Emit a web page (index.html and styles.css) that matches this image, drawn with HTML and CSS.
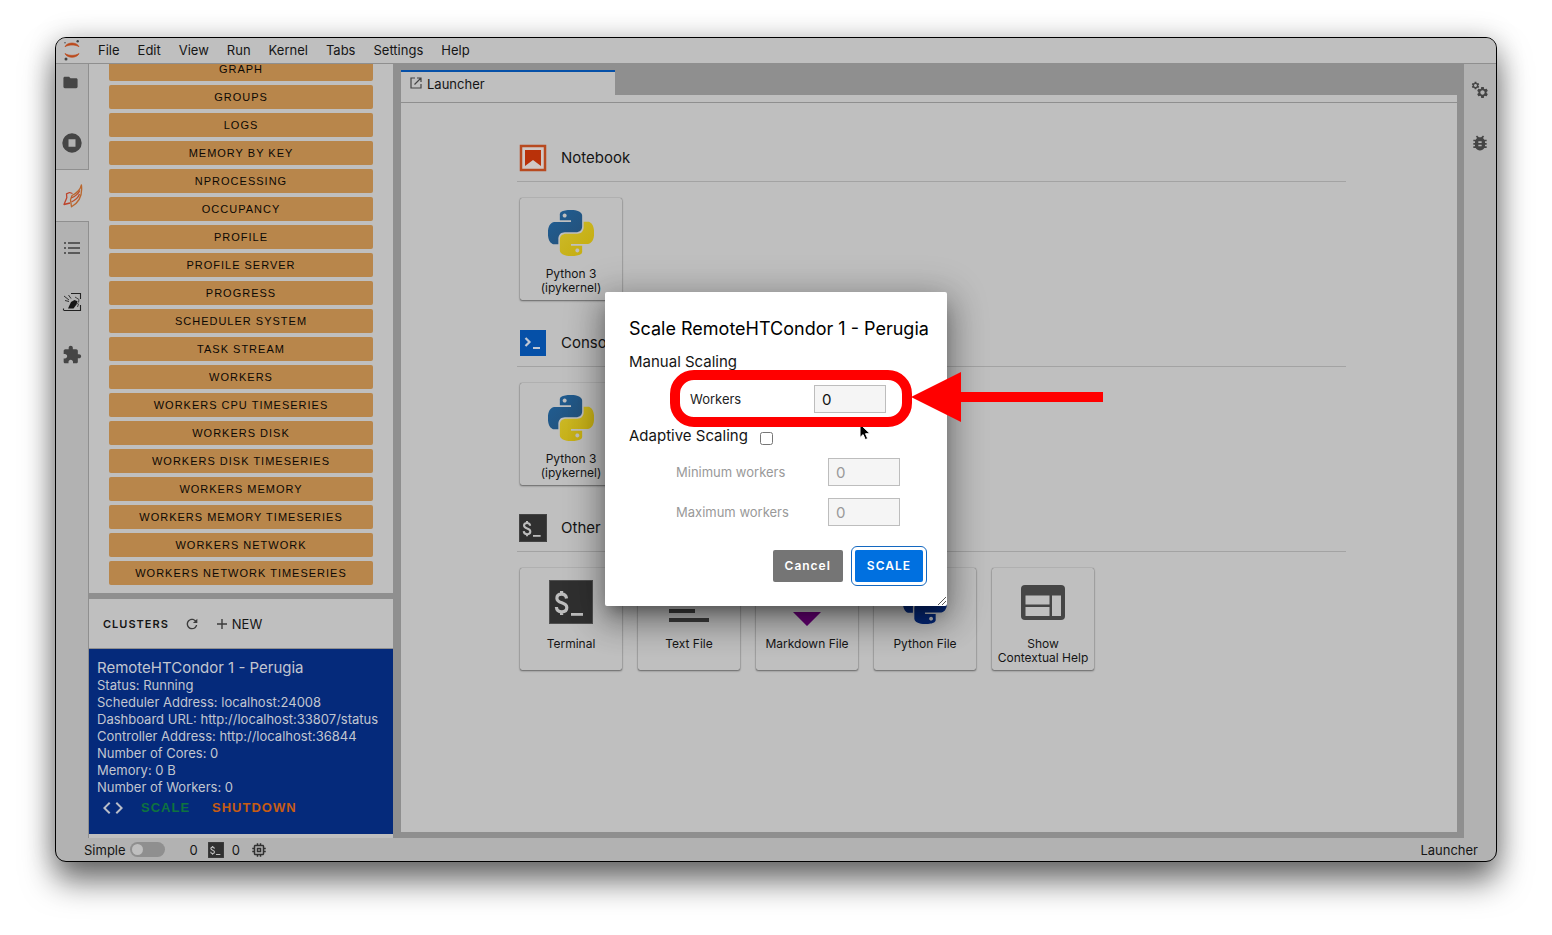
FILE: index.html
```html
<!DOCTYPE html>
<html lang="en">
<head>
<meta charset="utf-8">
<title>JupyterLab</title>
<link rel="stylesheet" href="styles.css">
</head>
<body>
<svg class="defs" width="0" height="0" aria-hidden="true">
  <linearGradient id="py-blue" x1="0" y1="0" x2="1" y2="1"><stop offset="0" stop-color="#1f5f96"/><stop offset="1" stop-color="#254f76"/></linearGradient>
  <linearGradient id="py-yellow" x1="0" y1="0" x2="1" y2="1"><stop offset="0" stop-color="#cdbb2c"/><stop offset="1" stop-color="#c4ab0c"/></linearGradient>
  <symbol id="py-top" viewBox="0 0 24 24"><path d="M14.25.18l.9.2.73.26.59.3.45.32.34.34.25.34.16.33.1.3.04.26.02.2-.01.13V8.5l-.05.63-.13.55-.21.46-.26.38-.3.31-.33.25-.35.19-.35.14-.33.1-.3.07-.26.04-.21.02H8.77l-.69.05-.59.14-.5.22-.41.27-.33.32-.27.35-.2.36-.15.37-.1.35-.07.32-.04.27-.02.21v3.06H3.17l-.21-.03-.28-.07-.32-.12-.35-.18-.36-.26-.36-.36-.35-.46-.32-.59-.28-.73-.21-.88-.14-1.05-.05-1.23.06-1.22.16-1.04.24-.87.32-.71.36-.57.4-.44.42-.33.42-.24.4-.16.36-.1.32-.05.24-.01h.16l.06.01h8.16v-.83H6.18l-.01-2.75-.02-.37.05-.34.11-.31.17-.28.25-.26.31-.23.38-.2.44-.18.51-.15.58-.12.64-.1.71-.06.77-.04.84-.02 1.27.05zm-6.3 1.98l-.23.33-.08.41.08.41.23.34.33.22.41.09.41-.09.33-.22.23-.34.08-.41-.08-.41-.23-.33-.33-.22-.41-.09-.41.09z"/></symbol>
  <symbol id="py-bottom" viewBox="0 0 24 24"><path d="M21.04 6.11l.28.06.32.12.35.18.36.27.36.35.35.47.32.59.28.73.21.88.14 1.04.05 1.23-.06 1.23-.16 1.04-.24.86-.32.71-.36.57-.4.45-.42.33-.42.24-.4.16-.36.09-.32.05-.24.02-.16-.01h-8.22v.82h5.84l.01 2.76.02.36-.05.34-.11.31-.17.29-.25.25-.31.24-.38.2-.44.17-.51.15-.58.13-.64.09-.71.07-.77.04-.84.01-1.27-.04-1.07-.14-.9-.2-.73-.25-.59-.3-.45-.33-.34-.34-.25-.34-.16-.33-.1-.3-.04-.25-.02-.2.01-.13v-5.34l.05-.64.13-.54.21-.46.26-.38.3-.32.33-.24.35-.2.35-.14.33-.1.3-.06.26-.04.21-.02.13-.01h5.84l.69-.05.59-.14.5-.21.41-.28.33-.32.27-.35.2-.36.15-.36.1-.35.07-.32.04-.28.02-.21V6.07h2.09l.14.01zm-6.47 14.25l-.23.33-.08.41.08.41.23.33.33.23.41.08.41-.08.33-.23.23-.33.08-.41-.08-.41-.23-.33-.33-.23-.41-.08-.41.08z"/></symbol>
  <symbol id="gear" viewBox="0 0 24 24"><path d="M19.43 12.98c.04-.32.07-.64.07-.98s-.03-.66-.07-.98l2.11-1.65c.19-.15.24-.42.12-.64l-2-3.46c-.12-.22-.39-.3-.61-.22l-2.49 1c-.52-.4-1.08-.73-1.69-.98l-.38-2.65C14.46 2.18 14.25 2 14 2h-4c-.25 0-.46.18-.49.42l-.38 2.65c-.61.25-1.17.59-1.69.98l-2.49-1c-.23-.09-.49 0-.61.22l-2 3.46c-.13.22-.07.49.12.64l2.11 1.65c-.04.32-.07.65-.07.98s.03.66.07.98l-2.11 1.65c-.19.15-.24.42-.12.64l2 3.46c.12.22.39.3.61.22l2.49-1c.52.4 1.08.73 1.69.98l.38 2.65c.03.24.24.42.49.42h4c.25 0 .46-.18.49-.42l.38-2.65c.61-.25 1.17-.59 1.69-.98l2.49 1c.23.09.49 0 .61-.22l2-3.46c.12-.22.07-.49-.12-.64l-2.11-1.65zM12 16c-2.2 0-4-1.8-4-4s1.8-4 4-4 4 1.8 4 4-1.8 4-4 4z"/></symbol>
  <symbol id="terminal" viewBox="0 0 44 44"><rect width="44" height="44" fill="#303030"/><rect x=".5" y=".5" width="43" height="43" fill="none" stroke="#505050"/><path d="M17.500 18.500c-.3-3-2-4.300-4.900-4.300s-4.700 1.500-4.700 4c0 6 9.900 3.300 9.900 9.300 0 2.600-1.900 4.300-5 4.300-3.300 0-5.200-1.700-5.400-4.800M12.600 11v4M12.600 31v4" fill="none" stroke="#bdbdbd" stroke-width="3.200"/><path d="M22 33h12v2.800H22z" fill="#bdbdbd"/></symbol>
</svg>

<div class="window">
  <header class="menubar">
    <svg class="logo" width="18" height="22" viewBox="0 0 18 22" aria-label="Jupyter"><path d="M2 7.800C4 2.800 14 2.800 16 7.800 12.500 5.400 5.500 5.400 2 7.800zM2 14.500c2 5 12 5 14 0-3.500 2.500-10.500 2.500-14 0z" fill="#bb4a1c" stroke="#bb4a1c" stroke-width=".7"/><circle cx="14.700" cy="2.200" r="1.200" fill="#444"/><circle cx="2" cy="3.800" r=".8" fill="#555"/><circle cx="3" cy="20" r="1.500" fill="#444"/></svg>
    <nav class="menus" aria-label="Main menu">
      <button>File</button><button>Edit</button><button>View</button><button>Run</button><button>Kernel</button><button>Tabs</button><button>Settings</button><button>Help</button>
    </nav>
  </header>

  <div class="workspace">
    <nav class="rail rail-left" aria-label="Left sidebar">
      <button class="rail-tab rail-folder" aria-label="File browser"><svg width="17" height="17" viewBox="0 0 24 24"><path d="M10 4H4c-1.100 0-1.990.9-1.990 2L2 18c0 1.100.9 2 2 2h16c1.100 0 2-.9 2-2V8c0-1.100-.9-2-2-2h-8l-2-2z"/></svg></button>
      <button class="rail-tab" aria-label="Running terminals and kernels"><svg width="20" height="20" viewBox="0 0 20 20"><path fill-rule="evenodd" d="M10 .3a9.700 9.700 0 1 0 0 19.400A9.700 9.700 0 0 0 10 .3zM6.500 6.200h7v7.600h-7z"/></svg></button>
      <button class="rail-tab is-current" aria-label="Dask"><svg width="20" height="24" viewBox="0 0 20 24" fill="none" stroke-width="1.300" stroke-linejoin="round"><path d="M6.500 8.500l-3 1.300.3 4L1 20.500l6-1.500M6.500 8.500l3 1" stroke="#bd432b"/><path d="M8.500 22.800l-1-7 1.500-4.300C14 9 17.500 5.500 18.400 1c1.200 9-1.600 17-9.900 21.800z" stroke="#b9672f"/><path d="M8.300 14c4-1.800 7-4 8.500-7.500M8.500 18c4-2 7-5 8-8" stroke="#bd502d"/></svg></button>
      <button class="rail-tab" aria-label="Table of contents"><svg width="16" height="13" viewBox="0 0 16 13" fill="#5a5a5a"><path d="M0 0h2v2H0zM4 0h12v2H4zM0 5h2v2H0zM4 5h12v2H4zM0 10h2v2H0zM4 10h12v2H4z"/></svg></button>
      <button class="rail-tab" aria-label="Jobs"><svg width="20" height="20" viewBox="0 0 20 20"><path d="M9 1.500h9.500V7M18.500 13v5.500H2M1.500 16.500v2" fill="none" stroke="#222" stroke-width="1.100"/><path d="M6 16.500l3-6.500 3.500-2 3 1.200-1 3.300-3 4z" fill="#161616"/><path d="M2 4l5 4M6.500 3l2.500 3.500M3 8.500l4 1" stroke="#333" stroke-width="1"/><path d="M13 5l4 2.500-.5 3M15 11l1.500 1-1 3" stroke="#444" fill="none"/></svg></button>
      <button class="rail-tab" aria-label="Extensions"><svg width="20" height="20" viewBox="0 0 24 24"><path d="M20.500 11H19V7c0-1.100-.9-2-2-2h-4V3.500C13 2.120 11.880 1 10.500 1S8 2.120 8 3.500V5H4c-1.100 0-1.990.9-1.990 2v3.800H3.500c1.490 0 2.700 1.210 2.700 2.700s-1.210 2.700-2.700 2.700H2V20c0 1.100.9 2 2 2h3.800v-1.500c0-1.490 1.210-2.700 2.700-2.700 1.490 0 2.700 1.210 2.700 2.700V22H17c1.100 0 2-.9 2-2v-4h1.500c1.380 0 2.500-1.120 2.500-2.500S21.880 11 20.500 11z"/></svg></button>
      <div class="rail-rest"></div>
    </nav>

    <aside class="dask">
      <div class="dashboards">
        <button>GRAPH</button><button>GROUPS</button><button>LOGS</button><button>MEMORY BY KEY</button><button>NPROCESSING</button><button>OCCUPANCY</button><button>PROFILE</button><button>PROFILE SERVER</button><button>PROGRESS</button><button>SCHEDULER SYSTEM</button><button>TASK STREAM</button><button>WORKERS</button><button>WORKERS CPU TIMESERIES</button><button>WORKERS DISK</button><button>WORKERS DISK TIMESERIES</button><button>WORKERS MEMORY</button><button>WORKERS MEMORY TIMESERIES</button><button>WORKERS NETWORK</button><button>WORKERS NETWORK TIMESERIES</button>
      </div>
      <div class="clusters-head">
        <h2>CLUSTERS</h2>
        <button aria-label="Refresh clusters"><svg width="16" height="16" viewBox="0 0 18 18"><path d="M9 13.500c-2.490 0-4.500-2.010-4.500-4.500S6.510 4.500 9 4.500c1.240 0 2.360.52 3.170 1.330L10 8h5V3l-1.760 1.760C12.150 3.680 10.660 3 9 3 5.690 3 3.010 5.690 3.010 9S5.690 15 9 15c2.970 0 5.430-2.160 5.900-5h-1.520c-.46 2-2.240 3.500-4.380 3.500z"/></svg></button>
        <button class="new"><svg width="10" height="10" viewBox="0 0 10 10"><path d="M4.300 0h1.400v4.300H10v1.400H5.700V10H4.300V5.700H0V4.300h4.300z"/></svg>NEW</button>
      </div>
      <section class="cluster">
        <h3>RemoteHTCondor 1 - Perugia</h3>
        <p>Status: Running</p>
        <p>Scheduler Address: localhost:24008</p>
        <p>Dashboard URL: http://localhost:33807/status</p>
        <p>Controller Address: http://localhost:36844</p>
        <p>Number of Cores: 0</p>
        <p>Memory: 0 B</p>
        <p>Number of Workers: 0</p>
        <div class="cluster-actions">
          <button aria-label="Inject client code"><svg width="24" height="24" viewBox="0 0 24 24" fill="#b9bdc8"><path d="M9.400 16.600L4.800 12l4.600-4.600L8 6l-6 6 6 6 1.400-1.400zm5.200 0l4.600-4.600-4.600-4.600L16 6l6 6-6 6-1.400-1.400z"/></svg></button>
          <button class="scale">SCALE</button>
          <button class="shutdown">SHUTDOWN</button>
        </div>
      </section>
    </aside>

    <main class="dock">
      <div class="tabs">
        <button class="tab"><svg width="14" height="14" viewBox="0 0 14 14" fill="none" stroke="#444" stroke-width="1.200"><path d="M6 2H2v10h10V8M8 2h4v4M12 2L5.500 8.500"/></svg>Launcher</button>
      </div>
      <div class="launcher">
        <section>
          <h2><svg width="28" height="28" viewBox="0 0 28 28"><rect x="2" y="2" width="24" height="24" fill="#d0c8c5" stroke="#b84a20" stroke-width="2.500"/><path d="M6 6h16v16l-8-6-8 6z" fill="#b93109"/></svg>Notebook</h2>
          <div class="cards">
            <button class="card"><svg width="46" height="46"><use href="#py-top" fill="url(#py-blue)"/><use href="#py-bottom" fill="url(#py-yellow)"/></svg><span>Python 3<br>(ipykernel)</span></button>
          </div>
        </section>
        <section>
          <h2><svg width="28" height="28" viewBox="0 0 28 28"><rect x="1" y="1" width="26" height="26" fill="#0550a8"/><path d="M6.500 9l4 4-4 4" fill="none" stroke="#c0c8d4" stroke-width="2.200"/><path d="M14 18h7v2h-7z" fill="#c0c8d4"/></svg>Console</h2>
          <div class="cards">
            <button class="card"><svg width="46" height="46"><use href="#py-top" fill="url(#py-blue)"/><use href="#py-bottom" fill="url(#py-yellow)"/></svg><span>Python 3<br>(ipykernel)</span></button>
          </div>
        </section>
        <section>
          <h2><svg width="28" height="28"><use href="#terminal"/></svg>Other</h2>
          <div class="cards">
            <button class="card"><svg width="44" height="44"><use href="#terminal"/></svg><span>Terminal</span></button>
            <button class="card"><svg width="46" height="46" viewBox="0 0 46 46" fill="#3c3c3c"><path d="M3 2h40v4H3zM3 11h26v4H3zM3 20h40v4H3zM3 29h26v4H3zM3 38h40v4H3z"/></svg><span>Text File</span></button>
            <button class="card"><svg width="46" height="46" viewBox="0 0 46 46" fill="#650074"><path d="M8 8h6l9 11 9-11h6v16h-6v-8l-9 10-9-10v8H8zM9 32h28L23 46z"/></svg><span>Markdown File</span></button>
            <button class="card"><svg width="44" height="44"><use href="#py-top" fill="#052878"/><use href="#py-bottom" fill="#052878"/></svg><span>Python File</span></button>
            <button class="card"><svg width="46" height="46" viewBox="0 0 46 46"><rect x="1" y="5" width="44" height="35" rx="4" fill="#454545"/><path d="M5.500 15.500h24v9h-24zM5.500 27h24v9h-24zM32 15.500h9V36h-9z" fill="#bfbfbf"/></svg><span>Show<br>Contextual Help</span></button>
          </div>
        </section>
      </div>
    </main>

    <nav class="rail rail-right" aria-label="Right sidebar">
      <button class="rail-tab" aria-label="Property inspector"><svg width="18" height="18" viewBox="0 0 18 18"><use href="#gear" x="0" y="0" width="9" height="9"/><use href="#gear" x="5" y="5" width="13" height="13"/></svg></button>
      <button class="rail-tab" aria-label="Debugger"><svg width="20" height="20" viewBox="0 0 24 24"><path d="M20 8h-2.810c-.45-.78-1.070-1.450-1.820-1.960L17 4.410 15.590 3l-2.170 2.170C12.960 5.060 12.490 5 12 5c-.49 0-.96.06-1.410.17L8.410 3 7 4.410l1.620 1.630C7.880 6.550 7.260 7.220 6.810 8H4v2h2.090c-.05.33-.09.66-.09 1v1H4v2h2v1c0 .34.04.67.09 1H4v2h2.810c1.040 1.790 2.970 3 5.190 3s4.150-1.210 5.190-3H20v-2h-2.090c.05-.33.09-.66.09-1v-1h2v-2h-2v-1c0-.34-.04-.67-.09-1H20V8zm-6 8h-4v-2h4v2zm0-4h-4v-2h4v2z"/></svg></button>
    </nav>
  </div>

  <footer class="status">
    <label class="simple">Simple <input type="checkbox" role="switch"></label>
    <button>0</button>
    <svg width="16" height="16"><use href="#terminal"/></svg>
    <button>0</button>
    <svg width="18" height="18" viewBox="0 0 24 24"><path d="M15 9H9v6h6V9zm-2 4h-2v-2h2v2zm8-2V9h-2V7c0-1.100-.9-2-2-2h-2V3h-2v2h-2V3H9v2H7c-1.100 0-2 .9-2 2v2H3v2h2v2H3v2h2v2c0 1.100.9 2 2 2h2v2h2v-2h2v2h2v-2h2c1.100 0 2-.9 2-2v-2h2v-2h-2v-2h2zm-4 6H7V7h10v10z"/></svg>
    <span class="where">Launcher</span>
  </footer>

  <div class="overlay">
    <form class="dialog" role="dialog" aria-labelledby="dlg-title">
      <h1 id="dlg-title">Scale RemoteHTCondor 1 - Perugia</h1>
      <p class="group">Manual Scaling</p>
      <div class="field field-manual"><label for="workers">Workers</label><input id="workers" type="text" inputmode="numeric" value="0"></div>
      <div class="group adaptive"><label for="adaptive">Adaptive Scaling</label><input id="adaptive" type="checkbox"></div>
      <div class="field"><label for="min">Minimum workers</label><input id="min" type="text" value="0" disabled></div>
      <div class="field"><label for="max">Maximum workers</label><input id="max" type="text" value="0" disabled></div>
      <div class="buttons"><button type="button">Cancel</button><button type="submit" class="primary">SCALE</button></div>
      <svg class="grip" width="8" height="8" viewBox="0 0 8 8"><path d="M0 8l8-8M4 8l4-4" stroke="#444" stroke-width=".9"/></svg>
      <svg class="pointer" width="13" height="19" viewBox="0 0 13 19"><path d="M1 1v13.500l3.100-2.900 2.200 5 2.400-1-2.200-4.900h4.600z" fill="#000" stroke="#fff" stroke-width="1"/></svg>
      <div class="highlight"></div>
      <svg class="arrow" width="192" height="50" viewBox="0 0 192 50"><path d="M0 25L50 0v20h142v10H50v20z" fill="#f00"/></svg>
    </form>
  </div>
</div>
</body>
</html>
```
FILE: styles.css
```css
* { box-sizing: border-box; }
body {
  margin: 0;
  height: 100vh;
  padding: 37px 55px 73px;
  display: flex;
  background: #fff;
  color: #151515;
  font: 13px/16px Inter, "Liberation Sans", sans-serif;
}
h1, h2, h3, p { margin: 0; font-weight: 400; }
button { border: 0; padding: 0; background: none; font: inherit; color: inherit; }
svg { display: block; flex: none; }
.defs { position: absolute; }

.window {
  position: relative;
  flex: 1;
  min-width: 0;
  display: flex;
  flex-direction: column;
  border: 1px solid #000;
  border-radius: 11px;
  background: #b2b2b2;
  box-shadow: 0 19px 32px rgba(0, 0, 0, .56), 0 0 28px rgba(0, 0, 0, .18);
}

.menubar {
  display: flex;
  align-items: center;
  height: 26px;
  padding: 0 0 1px 7px;
  border-bottom: 1px solid #8f8f8f;
  border-radius: 10px 10px 0 0;
  background: #bfbfbf;
}
.menus { display: flex; gap: 18px; margin-left: 17px; }

.workspace { flex: 1; min-height: 0; display: flex; }

.rail { display: flex; flex-direction: column; fill: #454545; }
.rail-tab { display: grid; place-items: center; height: 53px; }
.rail-tab:first-child { height: 52px; }
.rail-left { width: 33px; }
.rail-left .rail-tab { border-right: 1px solid #8f8f8f; }
.rail-left .is-current { background: #bfbfbf; border: solid #8f8f8f; border-width: 1px 0; }
.rail-left .rail-folder { justify-content: start; padding: 0 0 16px 6px; }
.rail-rest { flex: 1; border-right: 1px solid #8f8f8f; }
.rail-right { width: 32px; }

.dask { width: 304px; display: flex; flex-direction: column; background: #bfbfbf; }
.dashboards {
  flex: 1;
  min-height: 0;
  overflow: hidden;
  display: flex;
  flex-direction: column;
  justify-content: flex-end;
  gap: 4px;
  padding: 0 20px 8px;
}
.dashboards button {
  flex: none;
  height: 24px;
  border-radius: 2px;
  background: #b8864b;
  color: #0c0804;
  font: 11px/24px "Liberation Sans", Arial, sans-serif;
  letter-spacing: 1px;
}
.clusters-head {
  display: flex;
  flex: none;
  align-items: center;
  height: 56px;
  padding: 0 14px;
  border-top: 6px solid #8f8f8f;
  border-bottom: 1px solid #8f8f8f;
  fill: #3c3c3c;
}
.clusters-head h2 { margin-right: 15px; font-size: 11px; font-weight: 600; letter-spacing: 1px; }
.clusters-head .new { display: flex; align-items: center; gap: 5px; margin-left: 17px; }

.cluster { flex: none; height: 185px; margin-bottom: 4px; padding: 9px 8px 0; background: #052a7b; color: #c2c6d0; line-height: 17px; white-space: nowrap; }
.cluster h3 { font-size: 15px; line-height: 19px; }
.cluster-actions { display: flex; align-items: center; padding: 0 4px; font: bold 13px/16px "Liberation Sans", Arial, sans-serif; }
.cluster-actions button { letter-spacing: 1px; }
.cluster-actions .scale { margin-left: 16px; color: #0e7340; }
.cluster-actions .shutdown { margin-left: 22px; color: #c75c13; }

.dock { flex: 1; min-width: 0; display: flex; flex-direction: column; padding: 6px 7px 6px 8px; background: #8f8f8f; }
.tabs { display: flex; height: 25px; }
.tab { display: flex; gap: 4px; width: 214px; padding: 4px 8px; border-top: 2px solid #0550a8; background: #bfbfbf; }
.launcher { flex: 1; padding: 47px 111px 0 116px; background: linear-gradient(#bfbfbf 7px, #8f8f8f 7px, #8f8f8f 8px, #bfbfbf 8px); }
.launcher section { height: 185px; }
.launcher h2 { display: flex; align-items: center; gap: 14px; height: 40px; padding: 0 0 8px 2px; border-bottom: 1px solid #a3a3a3; font-size: 15px; }
.cards { display: flex; gap: 16px; padding: 16px 3px; }
.card {
  display: flex;
  flex-direction: column;
  align-items: center;
  width: 102px;
  height: 102px;
  padding-top: 12px;
  border-radius: 2px;
  box-shadow: 0 0 1px rgba(0, 0, 0, .5), 0 1px 2px rgba(0, 0, 0, .45);
  font-size: 12px;
  line-height: 14px;
  white-space: nowrap;
}
.card span { margin-top: auto; height: 33px; }

.status { display: flex; flex: none; align-items: center; height: 23px; padding: 0 18px 0 28px; fill: #303030; }
.simple { display: flex; align-items: center; gap: 4px; margin-right: 25px; }
.simple input { appearance: none; width: 35px; height: 15px; margin: 0; padding: 2px; border-radius: 8px; background: #8f8f8f; }
.simple input::before { content: ""; display: block; width: 11px; height: 11px; border-radius: 50%; background: #bfbfbf; }
.status > svg { margin: 0 8px 0 10px; }
.where { margin-left: auto; }

.overlay { position: absolute; inset: 0; display: grid; place-items: center; padding-bottom: 1px; }
.dialog {
  position: relative;
  width: 342px;
  padding: 24px;
  border-radius: 2px;
  background: #fff;
  box-shadow: 0 10px 13px -6px rgba(0, 0, 0, .3), 0 14px 32px 3px rgba(0, 0, 0, .3), 0 6px 38px 7px rgba(0, 0, 0, .16);
}
.dialog h1 { color: #000; font-size: 18px; line-height: 26px; white-space: nowrap; }
.group { margin-top: 10px; font-size: 15px; line-height: 20px; }
.adaptive { display: flex; align-items: center; gap: 12px; margin: 13px 0 12px; }
.adaptive input { width: 13px; height: 13px; margin: 4px 0 0; }
.field { display: flex; align-items: center; margin: 0 0 12px 47px; color: #999; }
.field label { width: 152px; }
.field input { width: 72px; height: 28px; padding: 0 7px; border: 1px solid #bdbdbd; border-radius: 0; background: #f5f5f5; color: #999; font: inherit; font-size: 15px; }
.field-manual { margin: 13px 0 0 61px; color: #222; }
.field-manual label { width: 124px; }
.field-manual input { color: #111; }
.buttons { display: flex; justify-content: flex-end; gap: 12px; margin-top: 24px; }
.buttons button { height: 32px; padding: 0 12px; border-radius: 2px; background: #757575; color: #fff; font: 600 12px/32px Inter, "Liberation Sans", sans-serif; letter-spacing: 1px; }
.buttons .primary { background: #0070e0; outline: 1px solid #1468c0; outline-offset: 3px; }
.grip { position: absolute; right: 1px; bottom: 1px; }
.pointer { position: absolute; left: 254px; top: 131px; }
.highlight { position: absolute; left: 65px; top: 78px; width: 242px; height: 57px; border: 10px solid #f00; border-radius: 24px; }
.arrow { position: absolute; left: 306px; top: 80px; }
```
